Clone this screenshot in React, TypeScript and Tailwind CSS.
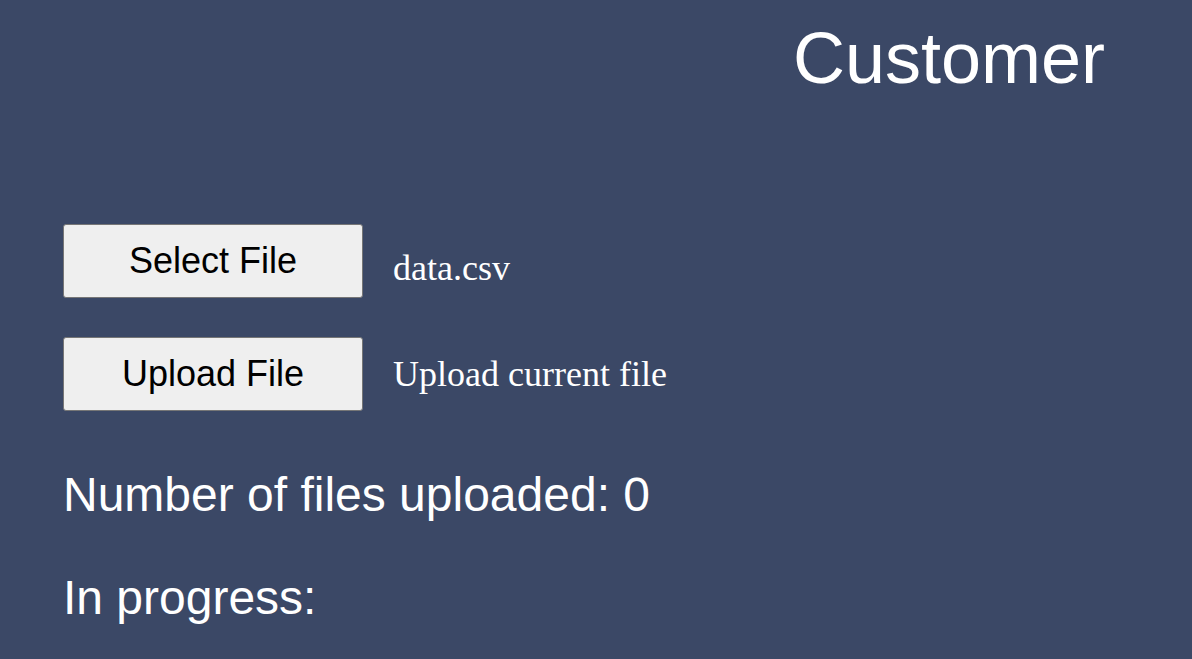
const ROWS = [
  { button: "Select File", label: "data.csv", labelOffset: "mt-[24px]" },
  { button: "Upload File", label: "Upload current file", labelOffset: "mt-[17px]" },
] as const;

export default function App() {
  return (
    <div className="min-h-screen w-full bg-[#3b4866] font-['Liberation_Sans',Arial,sans-serif] text-white">
      {/* 제목 */}
      <header className="flex justify-end pt-[22px] pr-[87px]">
        <h1 className="text-[72px] leading-[72px] font-normal">Customer</h1>
      </header>

      <main className="flex flex-col pl-[63px] pt-[130px]">
        {/* 파일 버튼 */}
        <div className="flex flex-col gap-[39px]">
          {ROWS.map((row) => (
            <div key={row.button} className="flex items-start gap-[30px]">
              <button className="h-[74px] w-[300px] rounded-[3px] border border-[#767676] bg-[#efefef] text-[36px] text-black">
                {row.button}
              </button>
              <span
                className={`${row.labelOffset} font-['Liberation_Serif','Times_New_Roman',serif] text-[36px] leading-[41px]`}
              >
                {row.label}
              </span>
            </div>
          ))}
        </div>

        {/* 상태 */}
        <div className="mt-[56px] flex flex-col gap-[48px] text-[48px] leading-[55px]">
          <p>Number of files uploaded: 0</p>
          <p>In progress:</p>
        </div>
      </main>
    </div>
  );
}
